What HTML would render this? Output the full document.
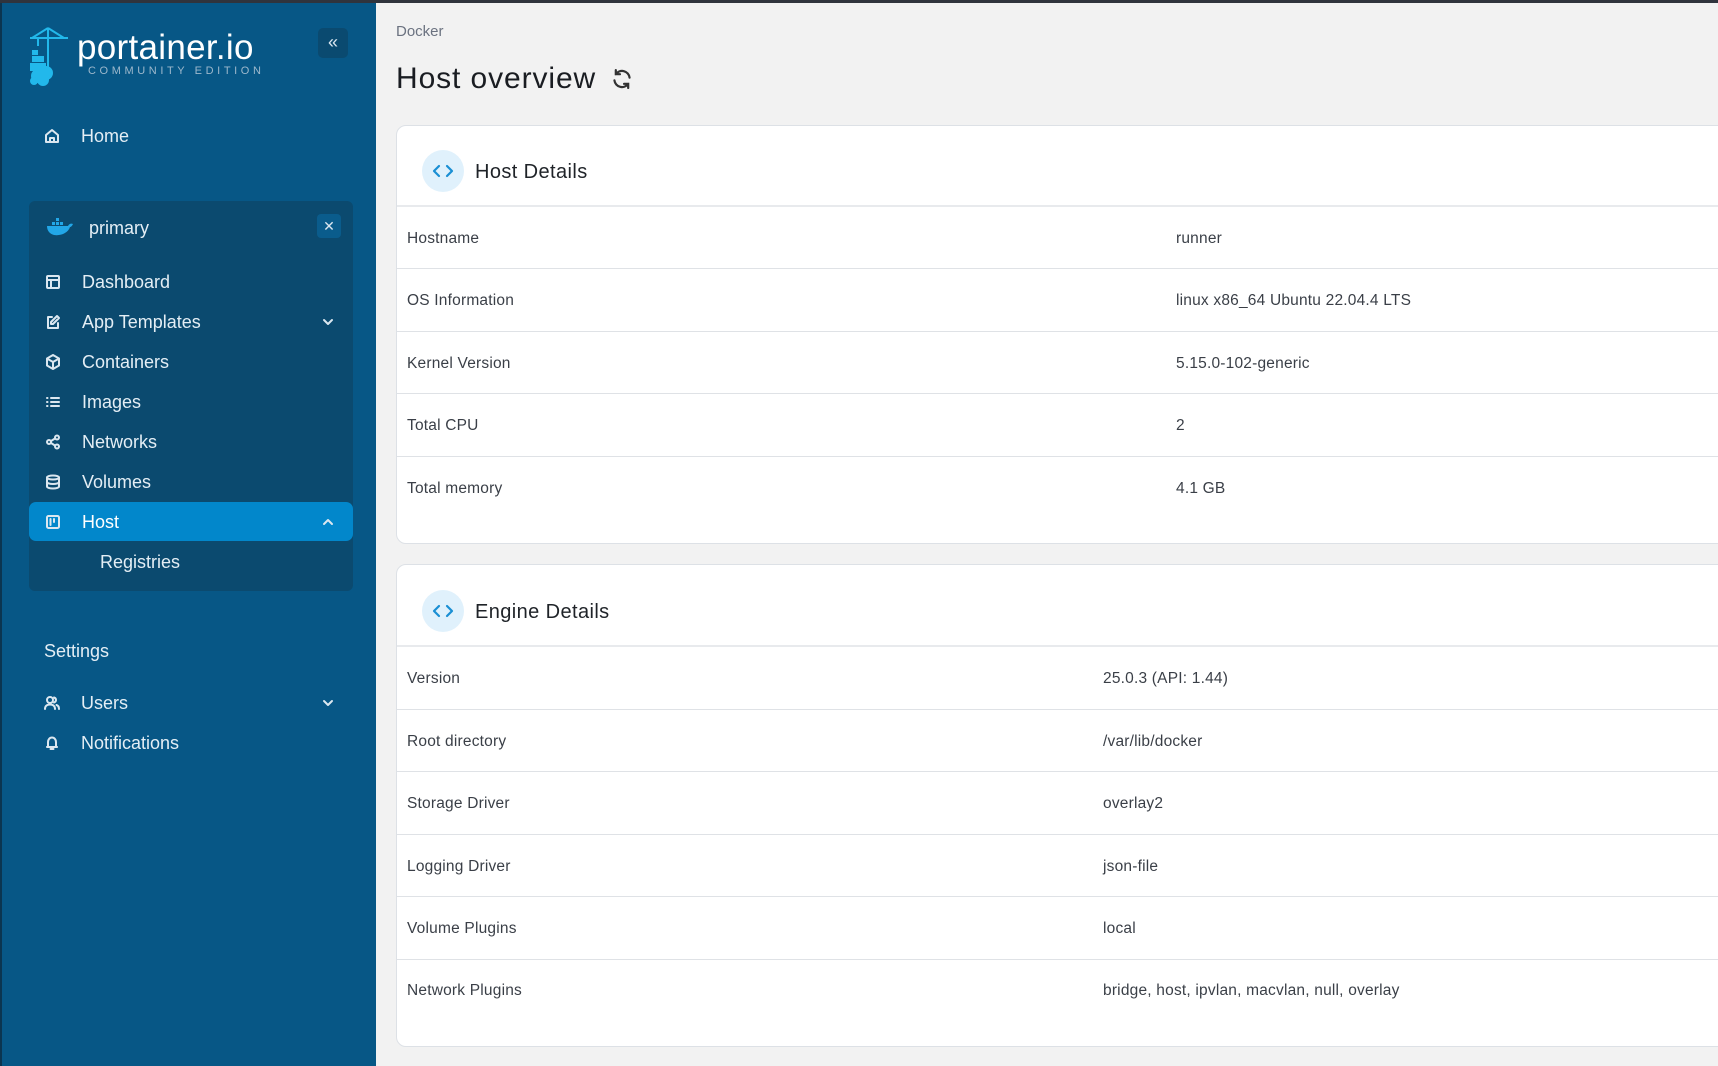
<!DOCTYPE html>
<html><head><meta charset="utf-8"><style>
*{margin:0;padding:0;box-sizing:border-box}
body{width:1718px;height:1066px;overflow:hidden;background:#f2f2f2;font-family:"Liberation Sans",sans-serif;position:relative}
.top{position:absolute;left:0;top:0;width:1718px;height:3px;background:#30343d;z-index:5}
.sb{position:absolute;left:0;top:0;width:376px;height:1066px;background:#075786;border-left:2px solid #0b3550}
.ab{position:absolute}
.t{position:absolute;color:#e4eef5;font-size:18px;line-height:20px}
.ic{position:absolute;width:16px;height:16px;fill:none;stroke:#dbe7f0;stroke-width:2;stroke-linecap:round;stroke-linejoin:round}
.env{position:absolute;left:27px;top:201px;width:324px;height:390px;background:#0b4a6f;border-radius:6px}
.host{position:absolute;left:27px;top:502px;width:324px;height:39px;background:#0287cb;border-radius:7px}
.card{position:absolute;left:396px;width:1340px;background:#fff;border:1px solid #dde1e6;border-radius:10px}
.hd{position:absolute;left:0;right:0;border-bottom:2px solid #e8eaed}
.circ{position:absolute;width:42px;height:42px;border-radius:50%;background:#e0f1fc}
.h2{position:absolute;font-size:20px;color:#1f2328;line-height:22px;letter-spacing:0.4px}
.row{position:absolute;left:0;right:0;border-top:1px solid #dfe2e6}
.k,.v{position:absolute;font-size:15.5px;color:#3a3f47;line-height:18px;letter-spacing:0.2px}
</style></head><body>
<div class="top"></div>
<div class="sb">
 <svg class="ab" style="left:24px;top:26px" width="46" height="60" viewBox="0 0 46 60">
  <g stroke="#22b8eb" stroke-width="2" fill="none"><path d="M22 2V44M4 12H42M22 2L6 12M22 2L38 12M12 12V20"/></g>
  <g fill="#22b8eb"><rect x="6" y="24" width="6" height="5"/><rect x="6" y="30" width="12" height="6"/><rect x="4" y="37" width="16" height="8"/>
  <circle cx="12" cy="50" r="7"/><circle cx="20" cy="47" r="7"/><circle cx="17" cy="54" r="6"/><circle cx="8" cy="55" r="4"/></g>
 </svg>
 <div class="t" style="left:75px;top:28px;font-size:35px;line-height:40px;color:#fff;letter-spacing:0.3px">portainer.io</div>
 <div class="t" style="left:86px;top:65px;font-size:11px;line-height:12px;color:#9db8cc;letter-spacing:3.6px">COMMUNITY EDITION</div>
 <div class="ab" style="left:316px;top:28px;width:30px;height:30px;background:#0a4a70;border-radius:5px;color:#dbe7f0;font-size:18px;text-align:center;line-height:28px">«</div>
 <svg class="ic" style="left:42px;top:128px" viewBox="0 0 16 16"><path d="M2 7L8 2L14 7V14H2Z M6 14V10H10V14"/></svg>
 <div class="t" style="left:79px;top:126px">Home</div>
 <div class="env"></div>
 <svg class="ab" style="left:44px;top:217px" width="28" height="20" viewBox="0 0 28 20"><g fill="#22a7e8"><rect x="6" y="5" width="3" height="3"/><rect x="10" y="5" width="3" height="3"/><rect x="14" y="5" width="3" height="3"/><rect x="10" y="1" width="3" height="3"/><path d="M1 9H22C23 7 25 6 27 7C26 9 25 10 24 10C22 16 15 19 8 18C4 17 1 14 1 9Z"/></g></svg>
 <div class="t" style="left:87px;top:218px">primary</div>
 <div class="ab" style="left:315px;top:214px;width:24px;height:24px;background:#0a5c8c;border-radius:4px;color:#dbe7f0;font-size:14px;text-align:center;line-height:24px">✕</div>
 <svg class="ic" style="left:43px;top:274px" viewBox="0 0 16 16"><rect x="2" y="2" width="12" height="12" rx="1"/><path d="M2 6H14M6 6V14"/></svg>
 <div class="t" style="left:80px;top:272px">Dashboard</div>
 <svg class="ic" style="left:43px;top:314px" viewBox="0 0 16 16"><path d="M7 3H3V14H13V9M12 2L14 4L8 10H6V8Z"/></svg>
 <div class="t" style="left:80px;top:312px">App Templates</div>
 <svg class="ic" style="left:318px;top:314px" viewBox="0 0 16 16"><path d="M4 6L8 10L12 6"/></svg>
 <svg class="ic" style="left:43px;top:354px" viewBox="0 0 16 16"><path d="M8 1L14 4.5V11.5L8 15L2 11.5V4.5Z M2 4.5L8 8L14 4.5M8 8V15"/></svg>
 <div class="t" style="left:80px;top:352px">Containers</div>
 <svg class="ic" style="left:43px;top:394px" viewBox="0 0 16 16"><path d="M2 4H2.5M2 8H2.5M2 12H2.5M6 4H14M6 8H14M6 12H14"/></svg>
 <div class="t" style="left:80px;top:392px">Images</div>
 <svg class="ic" style="left:43px;top:434px" viewBox="0 0 16 16"><circle cx="12" cy="3.5" r="2"/><circle cx="4" cy="8" r="2"/><circle cx="12" cy="12.5" r="2"/><path d="M6 7L10 4.5M6 9L10 11.5"/></svg>
 <div class="t" style="left:80px;top:432px">Networks</div>
 <svg class="ic" style="left:43px;top:474px" viewBox="0 0 16 16"><ellipse cx="8" cy="3.5" rx="6" ry="2"/><path d="M2 3.5V12.5C2 13.6 4.7 14.5 8 14.5S14 13.6 14 12.5V3.5M2 8C2 9.1 4.7 10 8 10S14 9.1 14 8"/></svg>
 <div class="t" style="left:80px;top:472px">Volumes</div>
 <div class="host"></div>
 <svg class="ic" style="left:43px;top:514px" viewBox="0 0 16 16"><rect x="2" y="2" width="12" height="12" rx="1.5"/><path d="M5.5 5V11M9 5V8"/></svg>
 <div class="t" style="left:80px;top:512px;color:#fff">Host</div>
 <svg class="ic" style="left:318px;top:514px" viewBox="0 0 16 16"><path d="M4 10L8 6L12 10"/></svg>
 <div class="t" style="left:98px;top:552px">Registries</div>
 <div class="t" style="left:42px;top:641px">Settings</div>
 <svg class="ic" style="left:42px;top:695px" viewBox="0 0 16 16"><circle cx="6" cy="5" r="3"/><path d="M1 14C1 11 3 9.5 6 9.5S11 11 11 14M10 2.5C11.5 3 12 4 12 5S11.5 7 10 7.5M12.5 10C14 10.5 15 12 15 14"/></svg>
 <div class="t" style="left:79px;top:693px">Users</div>
 <svg class="ic" style="left:318px;top:695px" viewBox="0 0 16 16"><path d="M4 6L8 10L12 6"/></svg>
 <svg class="ic" style="left:42px;top:735px" viewBox="0 0 16 16"><path d="M4 11V7C4 4.5 5.8 2.5 8 2.5S12 4.5 12 7V11L13 12H3Z M6.5 14H9.5"/></svg>
 <div class="t" style="left:79px;top:733px">Notifications</div>
</div>

<div class="ab" style="left:396px;top:23px;font-size:15px;color:#6b7280">Docker</div>
<div class="ab" style="left:396px;top:61px;font-size:30px;color:#1a1d22;line-height:36px;letter-spacing:0.9px">Host overview</div>
<svg class="ab" style="left:611px;top:68px" width="22" height="22" viewBox="0 0 16 16" fill="none" stroke="#333" stroke-width="1.6" stroke-linecap="round"><path d="M13.5 7A5.5 5.5 0 0 0 3.5 4.5M2.5 9A5.5 5.5 0 0 0 12.5 11.5M3.5 1.5V4.5H6.5M12.5 14.5V11.5H9.5"/></svg>

<div class="card" style="top:125px;height:419px">
 <div class="hd" style="top:0;height:81px"></div>
 <div class="circ" style="left:25px;top:24px"></div>
 <svg class="ab" style="left:35px;top:35px" width="22" height="20" viewBox="0 0 22 20" fill="none" stroke="#1a8fd4" stroke-width="2.2" stroke-linecap="round" stroke-linejoin="round"><path d="M7 5L2 10L7 15M15 5L20 10L15 15"/></svg>
 <div class="h2" style="left:78px;top:35px">Host Details</div>
 <div class="k" style="left:10px;top:104px">Hostname</div><div class="v" style="left:779px;top:104px">runner</div>
 <div class="row" style="top:142px"></div>
 <div class="k" style="left:10px;top:166px">OS Information</div><div class="v" style="left:779px;top:166px">linux x86_64 Ubuntu 22.04.4 LTS</div>
 <div class="row" style="top:205px"></div>
 <div class="k" style="left:10px;top:229px">Kernel Version</div><div class="v" style="left:779px;top:229px">5.15.0-102-generic</div>
 <div class="row" style="top:267px"></div>
 <div class="k" style="left:10px;top:291px">Total CPU</div><div class="v" style="left:779px;top:291px">2</div>
 <div class="row" style="top:330px"></div>
 <div class="k" style="left:10px;top:354px">Total memory</div><div class="v" style="left:779px;top:354px">4.1 GB</div>
</div>

<div class="card" style="top:564px;height:483px">
 <div class="hd" style="top:0;height:82px"></div>
 <div class="circ" style="left:25px;top:25px"></div>
 <svg class="ab" style="left:35px;top:36px" width="22" height="20" viewBox="0 0 22 20" fill="none" stroke="#1a8fd4" stroke-width="2.2" stroke-linecap="round" stroke-linejoin="round"><path d="M7 5L2 10L7 15M15 5L20 10L15 15"/></svg>
 <div class="h2" style="left:78px;top:36px">Engine Details</div>
 <div class="k" style="left:10px;top:105px">Version</div><div class="v" style="left:706px;top:105px">25.0.3 (API: 1.44)</div>
 <div class="row" style="top:144px"></div>
 <div class="k" style="left:10px;top:168px">Root directory</div><div class="v" style="left:706px;top:168px">/var/lib/docker</div>
 <div class="row" style="top:206px"></div>
 <div class="k" style="left:10px;top:230px">Storage Driver</div><div class="v" style="left:706px;top:230px">overlay2</div>
 <div class="row" style="top:269px"></div>
 <div class="k" style="left:10px;top:293px">Logging Driver</div><div class="v" style="left:706px;top:293px">json-file</div>
 <div class="row" style="top:331px"></div>
 <div class="k" style="left:10px;top:355px">Volume Plugins</div><div class="v" style="left:706px;top:355px">local</div>
 <div class="row" style="top:394px"></div>
 <div class="k" style="left:10px;top:417px">Network Plugins</div><div class="v" style="left:706px;top:417px">bridge, host, ipvlan, macvlan, null, overlay</div>
</div>
</body></html>
